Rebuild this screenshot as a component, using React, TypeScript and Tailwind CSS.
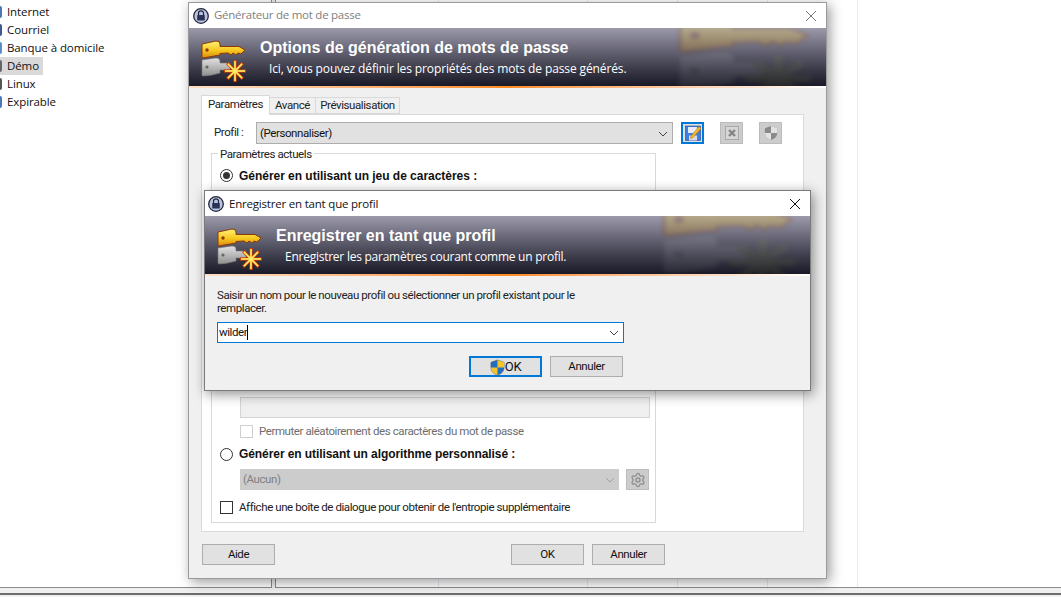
import React from "react";
import { Settings } from "lucide-react";

const FONT = "font-['Open_Sans','Noto_Sans',sans-serif]";

function KeyArt({ className, id, stretch }: { className?: string; id: string; stretch?: boolean }) {
  const rays = [0, 45, 90, 135];
  return (
    <svg viewBox="0 0 46 44" className={className} preserveAspectRatio={stretch ? "none" : "xMidYMid meet"}>
      <defs>
        <linearGradient id={id + "g"} x1="0" y1="0" x2="0" y2="1">
          <stop offset="0" stopColor="#fff27a" />
          <stop offset="0.55" stopColor="#f7c81e" />
          <stop offset="1" stopColor="#d98a10" />
        </linearGradient>
        <linearGradient id={id + "s"} x1="0" y1="0" x2="0" y2="1">
          <stop offset="0" stopColor="#e2e2e2" />
          <stop offset="1" stopColor="#8f8f8f" />
        </linearGradient>
      </defs>
      <path d="M1 4 L15 1 Q19 1 19 4 L19 6.5 L38 6.5 L44 10 L40 14 L37 13 L35 15 L32 13 L30 15 L27 13 L19 13.5 L19 15 L2 18 Q0.5 18 1 15 Z" fill={`url(#${id}g)`} stroke="#8a3a08" strokeWidth="1" />
      <circle cx="6" cy="10" r="1.7" fill="#8a3a08" />
      <g opacity={stretch ? 0.45 : 1}>
        <path d="M1 20 L15 18 Q19 18 19 21 L19 23 L29 23 L29 30 L19 30 L19 33 Q9 36 2 36 Q0.5 36 1 33 Z" fill={`url(#${id}s)`} stroke="#777" strokeWidth="0.6" />
        <circle cx="6" cy="27" r="1.6" fill="#666" />
        {rays.map((r) => (
          <line key={"o" + r} x1="34" y1="20" x2="34" y2="42" stroke={stretch ? "#8a9a30" : "#d83c00"} strokeWidth="3.2" transform={`rotate(${r} 34 31)`} />
        ))}
        {!stretch &&
          rays.map((r) => (
            <line key={"i" + r} x1="34" y1="21" x2="34" y2="41" stroke="#ffee66" strokeWidth="1.7" transform={`rotate(${r} 34 31)`} />
          ))}
      </g>
    </svg>
  );
}

function LockBadge() {
  return (
    <svg viewBox="0 0 16 16" className="h-4 w-4 shrink-0">
      <circle cx="8" cy="8" r="7.3" fill="#b9c4e0" stroke="#23263a" strokeWidth="1.3" />
      <path d="M5.5 7V5.3a2.5 2.5 0 0 1 5 0V7" fill="none" stroke="#23263a" strokeWidth="1.2" />
      <rect x="4.2" y="7" width="7.6" height="5.4" rx="0.6" fill="#2c3252" />
    </svg>
  );
}

function Close({ dark }: { dark?: boolean }) {
  return (
    <svg viewBox="0 0 12 12" className="h-3 w-3">
      <path d="M1 1L11 11M11 1L1 11" stroke={dark ? "#111" : "#777"} strokeWidth="1" fill="none" />
    </svg>
  );
}

function Chevron({ color = "#444" }: { color?: string }) {
  return (
    <svg viewBox="0 0 10 6" className="h-[6px] w-[10px]">
      <path d="M1 1L5 5L9 1" stroke={color} strokeWidth="1" fill="none" />
    </svg>
  );
}

function Banner({ title, sub, id, wmClass, subClass }: { title: string; sub: string; id: string; wmClass: string; subClass: string }) {
  return (
    <>
      <div className="relative h-[58px] overflow-hidden bg-gradient-to-b from-[#9d9bab] to-[#1a1927]">
        <KeyArt id={id + "w"} stretch className={`absolute right-[12px] h-[90px] w-[137px] opacity-25 blur-[2px] ${wmClass}`} />
        <div className="relative flex h-full items-start">
          <KeyArt id={id} className="ml-[12px] mt-[12px] h-[44px] w-[46px] shrink-0" />
          <div className="ml-[13px] flex flex-col">
            <div className="mt-[9px] font-['Liberation_Sans',sans-serif] text-[16px] font-bold leading-[22px] text-white">{title}</div>
            <div className={`ml-[9px] mt-[2px] text-[12px] leading-[16px] text-white ${subClass}`}>{sub}</div>
          </div>
        </div>
      </div>
      <div className="h-[2px] bg-gradient-to-r from-[#ffe0c4] via-[#ff8a1c] to-[#fff]" />
    </>
  );
}

function Btn({ children, focus, className = "" }: { children: React.ReactNode; focus?: boolean; className?: string }) {
  return (
    <div className={`flex h-[21px] w-[73px] shrink-0 items-center justify-center bg-[#e1e1e1] pt-[1px] text-[#111] ${focus ? "border-2 border-[#0078d7]" : "border border-[#adadad]"} ${className}`}>
      {children}
    </div>
  );
}

function Shield() {
  return (
    <svg viewBox="0 0 16 18" className="h-[17px] w-[15px]">
      <path d="M8 1L15 3.5V9C15 13 12 16 8 17C4 16 1 13 1 9V3.5Z" fill="#1f6fc4" stroke="#555" strokeWidth="0.6" />
      <path d="M8 1L15 3.5V9H8Z" fill="#f6c42a" />
      <path d="M8 9H1C1 13 4 16 8 17Z" fill="#f6c42a" />
    </svg>
  );
}

function TreeRow({ label, color, active }: { label: string; color: string; active?: boolean }) {
  return (
    <div className={`flex h-[18px] items-center text-[11.5px] tracking-[-0.1px] text-[#111] ${active ? "w-[43px] bg-[#d9d9d9]" : ""}`}>
      <span className="h-[12px] w-[2px] shrink-0 rounded-r-full" style={{ background: color }} />
      <span className="ml-[5px] whitespace-nowrap">{label}</span>
    </div>
  );
}

function Background() {
  return (
    <div className="flex h-[597px] flex-col bg-[#f0f0f0]">
      <div className="flex h-[588px] gap-[3px]">
        <div className="w-[272px] border-r border-b border-[#8c8c8c] bg-white pt-[3px]">
          <TreeRow label="Internet" color="#4a78b8" />
          <TreeRow label="Courriel" color="#3c5a90" />
          <TreeRow label="Banque à domicile" color="#5b8fc8" />
          <TreeRow label="Démo" color="#666" active />
          <TreeRow label="Linux" color="#555" />
          <TreeRow label="Expirable" color="#4a78b8" />
        </div>
        <div className="flex flex-1 border-b border-l border-[#8c8c8c] bg-white">
          <div className="w-[163px] border-r border-[#e3ecfa]" />
          <div className="w-[149px] border-r border-[#e3ecfa]" />
          <div className="w-[90px] border-r border-[#e3ecfa]" />
          <div className="w-[90px] border-r border-[#e3ecfa]" />
          <div className="w-[90px] border-r border-[#e3ecfa]" />
        </div>
      </div>
      <div className="mt-[5px] h-[2px] bg-[#6e6e6e]" />
    </div>
  );
}

function OuterWindow() {
  return (
    <div className="absolute left-[188px] top-[2px] flex h-[577px] w-[639px] flex-col border border-[#9a9a9a] bg-[#f0f0f0] shadow-[3px_3px_12px_rgba(0,0,0,0.4)]">
      <div className="flex h-[25px] shrink-0 items-center bg-white pl-[4px] pr-[9px]">
        <LockBadge />
        <span className="ml-[5px] mt-[-2px] flex-1 text-[11.5px] tracking-[-0.25px] text-[#808080]">Générateur de mot de passe</span>
        <Close />
      </div>
      <Banner id="a" title="Options de génération de mots de passe" sub="Ici, vous pouvez définir les propriétés des mots de passe générés." wmClass="top-[-13px]" subClass="tracking-[-0.12px]" />

      <div className="flex flex-1 flex-col pl-[12px] pr-[23px] pt-[6px] font-['Roboto',sans-serif] text-[11.5px] tracking-[-0.42px] text-[#222]">
        <div className="relative z-10 flex h-[20px] items-end">
          <div className="-mb-px flex h-[20px] w-[69px] items-center justify-center border border-b-0 border-[#d9d9d9] bg-white pb-[1px]">Paramètres</div>
          <div className="flex h-[17px] w-[46px] items-center justify-center border border-l-0 border-[#d9d9d9] bg-[#f0f0f0]">Avancé</div>
          <div className="flex h-[17px] w-[84px] items-center justify-center border border-l-0 border-[#d9d9d9] bg-[#f0f0f0]">Prévisualisation</div>
        </div>

        <div className="h-[418px] w-[603px] border border-[#d9d9d9] bg-white pl-[9px] pt-[7px]">
          <div className="flex h-[22px] items-center">
            <span className="ml-[3px] w-[42px]">Profil :</span>
            <div className="flex h-[22px] w-[417px] items-center justify-between border border-[#adadad] bg-[#e1e1e1] pl-[3px] pr-[4px] pt-[1px] text-[#111]">
              (Personnaliser)
              <Chevron />
            </div>
            <div className="ml-[8px] flex h-[22px] w-[23px] items-center justify-center border-2 border-[#0078d7] bg-[#e1e1e1]">
              <svg viewBox="0 0 16 16" className="h-[16px] w-[16px]">
                <rect x="0.5" y="1" width="15" height="14.5" fill="#3f7fe0" stroke="#27408f" strokeWidth="0.6" />
                <rect x="3" y="2" width="9" height="6" fill="#e4ecfa" />
                <rect x="4" y="10.5" width="8" height="5" fill="#d8d8e8" />
                <path d="M6 11L14 1.5L16 3.5L8 12.5L5.5 13.5Z" fill="#f6b820" stroke="#b06a00" strokeWidth="0.5" />
              </svg>
            </div>
            <div className="ml-[16px] flex h-[22px] w-[23px] items-center justify-center border border-[#bcbcbc] bg-[#cccccc]">
              <svg viewBox="0 0 14 14" className="h-[14px] w-[14px]">
                <rect x="0.5" y="0.5" width="13" height="13" fill="#d6d6d6" stroke="#a8a8a8" />
                <path d="M4 4L10 10M10 4L4 10" stroke="#858585" strokeWidth="2.4" />
              </svg>
            </div>
            <div className="ml-[16px] flex h-[22px] w-[23px] items-center justify-center border border-[#bcbcbc] bg-[#cccccc]">
              <svg viewBox="0 0 16 18" className="h-[16px] w-[14px]">
                <path d="M8 1L15 3.5V9C15 13 12 16 8 17C4 16 1 13 1 9V3.5Z" fill="#8a8a8a" />
                <path d="M8 1L15 3.5V9H8Z" fill="#e2e2e2" />
                <path d="M8 9H1C1 13 4 16 8 17Z" fill="#e2e2e2" />
              </svg>
            </div>
          </div>

          <div className="relative mt-[9px] h-[370px] w-[445px] border border-[#d9d9d9] pl-[8px]">
            <span className="absolute left-[6px] top-[-7px] bg-white px-[2px] leading-[14px]">Paramètres actuels</span>
            <div className="mt-[13px] flex h-[16px] items-center">
              <span className="flex h-[13px] w-[13px] items-center justify-center rounded-full border border-[#333]">
                <span className="h-[7px] w-[7px] rounded-full bg-[#333]" />
              </span>
              <span className="ml-[6px] mt-[1px] font-['Liberation_Sans',sans-serif] text-[12px] font-bold tracking-[-0.03px] text-[#111]">Générer en utilisant un jeu de caractères :</span>
            </div>

            <div className="h-[214px]" />

            <div className="ml-[20px] h-[21px] w-[410px] border border-[#d4d4d4] bg-[#f0f0f0]" />
            <div className="ml-[20px] mt-[6px] flex h-[14px] items-center">
              <span className="h-[13px] w-[13px] border border-[#cfcfcf]" />
              <span className="ml-[6px] mt-[1px] text-[#6d6d6d]">Permuter aléatoirement des caractères du mot de passe</span>
            </div>
            <div className="mt-[8px] flex h-[16px] items-center">
              <span className="h-[13px] w-[13px] rounded-full border border-[#333]" />
              <span className="ml-[6px] font-['Liberation_Sans',sans-serif] text-[12px] font-bold tracking-[-0.08px] text-[#111]">Générer en utilisant un algorithme personnalisé :</span>
            </div>
            <div className="ml-[20px] mt-[7px] flex h-[21px] items-center">
              <div className="flex h-[21px] w-[379px] items-center justify-between bg-[#cccccc] pl-[3px] pr-[4px] pt-[1px] text-[#7f7f7f]">
                (Aucun)
                <Chevron color="#a0a0a0" />
              </div>
              <div className="ml-[7px] flex h-[21px] w-[23px] items-center justify-center border border-[#bcbcbc] bg-[#cccccc]">
                <Settings className="h-[16px] w-[16px] text-[#8f8f8f]" strokeWidth={2} />
              </div>
            </div>
            <div className="mt-[10px] flex h-[14px] items-center">
              <span className="h-[13px] w-[13px] border border-[#333]" />
              <span className="ml-[6px] mt-[1px]">Affiche une boîte de dialogue pour obtenir de l'entropie supplémentaire</span>
            </div>
          </div>
        </div>

        <div className="ml-[1px] mt-[12px] flex">
          <Btn>Aide</Btn>
          <Btn className="ml-[236px]">OK</Btn>
          <Btn className="ml-[8px]">Annuler</Btn>
        </div>
      </div>
    </div>
  );
}

function InnerWindow() {
  return (
    <div className="absolute left-[204px] top-[190px] flex h-[201px] w-[607px] flex-col border border-[#7a7a7a] bg-[#f0f0f0] shadow-[2px_3px_12px_rgba(0,0,0,0.45)]">
      <div className="flex h-[25px] shrink-0 items-center bg-white pl-[3px] pr-[9px]">
        <LockBadge />
        <span className="ml-[5px] flex-1 text-[11.5px] tracking-[-0.2px] text-[#111]">Enregistrer en tant que profil</span>
        <Close dark />
      </div>
      <Banner id="b" title="Enregistrer en tant que profil" sub="Enregistrer les paramètres courant comme un profil." wmClass="top-[-17px]" subClass="tracking-[-0.25px]" />
      <div className="flex-1 pl-[12px] pt-[13px] font-['Roboto',sans-serif] text-[11.5px] tracking-[-0.42px] text-[#222]">
        <p className="w-[380px] leading-[13px]">
          Saisir un nom pour le nouveau profil ou sélectionner un profil existant pour le remplacer.
        </p>
        <div className="mt-[7px] flex h-[21px] w-[407px] items-center justify-between border border-[#0078d7] bg-white pl-[1px] pr-[4px] text-[#111]">
          <span className="flex h-full items-center">wilder<span className="h-[15px] w-px bg-black" /></span>
          <Chevron />
        </div>
        <div className="ml-[252px] mt-[13px] flex">
          <Btn focus><Shield /><span className="text-[13px]">OK</span></Btn>
          <Btn className="ml-[8px]">Annuler</Btn>
        </div>
      </div>
    </div>
  );
}

export default function App() {
  return (
    <div className={`relative h-[597px] w-[1061px] overflow-hidden bg-white ${FONT}`}>
      <Background />
      <OuterWindow />
      <InnerWindow />
    </div>
  );
}
